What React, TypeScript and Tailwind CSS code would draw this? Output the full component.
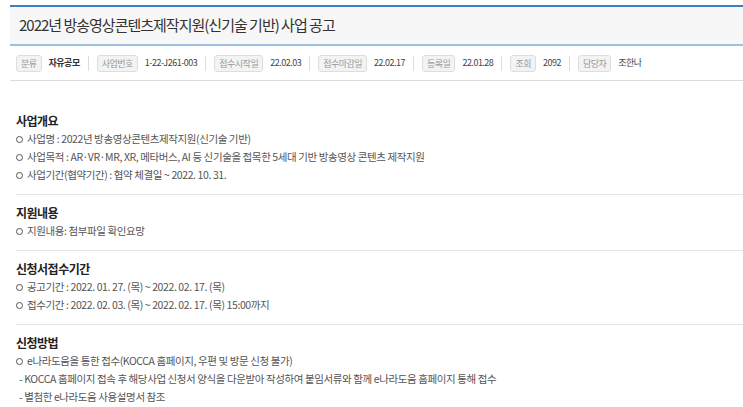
import React from 'react';

const metaItems: { label: string; value: string; bold?: boolean }[] = [
  { label: '분류', value: '자유공모', bold: true },
  { label: '사업번호', value: '1-22-J261-003' },
  { label: '접수시작일', value: '22.02.03' },
  { label: '접수마감일', value: '22.02.17' },
  { label: '등록일', value: '22.01.28' },
  { label: '조회', value: '2092' },
  { label: '담당자', value: '조한나' },
];

const sections: { title: string; lines: string[] }[] = [
  {
    title: '사업개요',
    lines: [
      'ㅇ 사업명 : 2022년 방송영상콘텐츠제작지원(신기술 기반)',
      'ㅇ 사업목적 : AR·VR·MR, XR, 메타버스, AI 등 신기술을 접목한 5세대 기반 방송영상 콘텐츠 제작지원',
      'ㅇ 사업기간(협약기간) : 협약 체결일 ~ 2022. 10. 31.',
    ],
  },
  { title: '지원내용', lines: ['ㅇ 지원내용: 첨부파일 확인요망'] },
  {
    title: '신청서접수기간',
    lines: [
      'ㅇ 공고기간 : 2022. 01. 27. (목) ~ 2022. 02. 17. (목)',
      'ㅇ 접수기간 : 2022. 02. 03. (목) ~ 2022. 02. 17. (목) 15:00까지',
    ],
  },
  {
    title: '신청방법',
    lines: [
      'ㅇ e나라도움을 통한 접수(KOCCA 홈페이지, 우편 및 방문 신청 불가)',
      ' - KOCCA 홈페이지 접속 후 해당사업 신청서 양식을 다운받아 작성하여 붙임서류와 함께 e나라도움 홈페이지 통해 접수',
      ' - 별첨한 e나라도움 사용설명서 참조',
    ],
  },
];

const Line: React.FC<{ text: string }> = ({ text }) => {
  const bullet = text.startsWith('ㅇ ');
  const dash = text.startsWith(' - ');
  return (
    <p className="h-[18px] leading-[18px] whitespace-nowrap">
      {bullet ? (
        <>
          <span className="inline-block w-[7px] h-[7px] rounded-full border border-[#555] mr-[4px] align-[0px]" />
          {text.slice(2)}
        </>
      ) : dash ? (
        <span className="pl-[3px]">{text.slice(1)}</span>
      ) : (
        text
      )}
    </p>
  );
};

export default function App() {
  return (
    <div className="w-[743px] h-[407px] overflow-hidden bg-white text-[#555] font-['Noto_Sans_CJK_KR','Noto_Sans',sans-serif]">
      <div className="ml-[10px] pt-[5px]">
        {/* title */}
        <div className="border-t-2 border-[#3e7fc0] border-b-2 border-b-[#9dc0e2] bg-[#f7f7f7] h-[41px] pl-[9px] flex items-center">
          <h1 className="text-[15px] text-[#333] tracking-[-1px]">2022년 방송영상콘텐츠제작지원(신기술 기반) 사업 공고</h1>
        </div>

        {/* meta */}
        <div className="h-[35px] border-b border-[#dcdcdc] flex items-center pl-[6px] text-[9px] tracking-[-0.5px]">
          {metaItems.map((m, i) => (
            <div key={m.label} className="flex items-center">
              {i > 0 && <span className="w-px h-[15px] bg-[#dcdcdc] mx-[8px]" />}
              <span className="px-[4px] h-[17px] leading-[15px] rounded-[3px] border border-[#dedede] bg-[#f3f3f3] text-[#999]">
                {m.label}
              </span>
              <span className={`ml-[7px] ${m.bold ? 'font-bold text-[#333]' : 'text-[#444]'}`}>{m.value}</span>
            </div>
          ))}
        </div>

        {/* body */}
        <div className="pl-[6px] pt-[31px] text-[10.5px] tracking-[-0.4px]">
          {sections.map((s, i) => (
            <div key={s.title} className={i > 0 ? 'border-t border-[#e3e3e3] pt-[9px] mt-[10px]' : ''}>
              <h2 className="text-[12px] font-bold text-[#222] h-[18px] leading-[18px] tracking-[-0.5px]">{s.title}</h2>
              {s.lines.map((l) => (
                <Line key={l} text={l} />
              ))}
            </div>
          ))}
        </div>
      </div>
    </div>
  );
}
